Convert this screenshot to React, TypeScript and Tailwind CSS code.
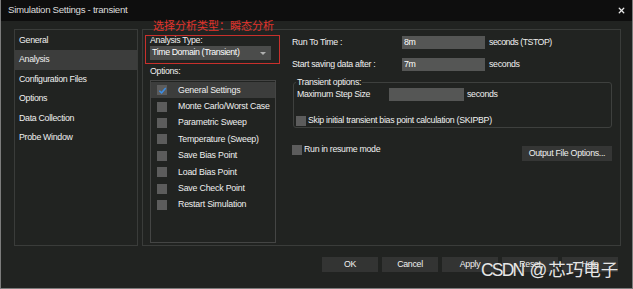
import { X } from "lucide-react";

const navItems = ["General", "Analysis", "Configuration Files", "Options", "Data Collection", "Probe Window"];

const optionItems = [
  "General Settings",
  "Monte Carlo/Worst Case",
  "Parametric Sweep",
  "Temperature (Sweep)",
  "Save Bias Point",
  "Load Bias Point",
  "Save Check Point",
  "Restart Simulation",
];

function Box({ checked }: { checked?: boolean }) {
  return (
    <span className="grid size-[10px] shrink-0 place-items-center bg-[#5c5c5c]">
      {checked && (
        <svg viewBox="0 0 10 10" className="size-[9px]">
          <path d="M1.5 5.2 L4 7.6 L8.6 2.2" fill="none" stroke="#3b8fe8" strokeWidth="1.6" />
        </svg>
      )}
    </span>
  );
}

function Field({ value, w }: { value?: string; w: string }) {
  return <div className={`h-[13px] ${w} shrink-0 bg-[#555655] pl-[2px] leading-[13px] text-white`}>{value}</div>;
}

export default function App() {
  return (
    <div className="relative flex h-[289px] w-[633px] flex-col overflow-hidden whitespace-nowrap border-x border-b border-[#7c7c7c] bg-[#212321] font-['Liberation_Sans',sans-serif] text-[8.8px] tracking-[-0.3px] text-[#f0f0f0]">
      <div className="flex h-[21px] shrink-0 items-center justify-between bg-[#0e0e0e] pl-[7px] pr-[6px]">
        <span className="text-[9.7px] tracking-[-0.3px] text-[#dcdcdc]">Simulation Settings - transient</span>
        <X className="size-[9px] text-[#e8e8e8]" strokeWidth={3.5} />
      </div>

      <div className="flex gap-[4px] pl-[13px] pt-[8px]">
        {/* left nav */}
        <div className="flex h-[217px] w-[124px] flex-col border border-[#3a3c3a] pt-[1px]">
          {navItems.map((n) => (
            <div key={n} className={`flex h-[19.4px] items-center pl-[4px] ${n === "Analysis" ? "bg-[#3c3d3c]" : ""}`}>
              {n}
            </div>
          ))}
        </div>

        {/* main panel */}
        <div className="flex h-[217px] w-[479px] border border-[#3a3c3a] pl-[7px]">
          <div className="flex w-[126px] flex-col">
            <div className="mt-[5px] h-[11px] leading-[11px]">Analysis Type:</div>
            <div className="flex h-[14px] w-[121px] items-center justify-between bg-[#4b4c4b] pl-[2px] pr-[5px] tracking-[-0.4px] text-white">
              <span>Time Domain (Transient)</span>
              <span className="h-0 w-0 border-x-[3px] border-t-[3px] border-x-transparent border-t-[#b0b0b0]" />
            </div>
            <div className="mt-[5px] h-[12px] leading-[12px]">Options:</div>
            <div className="mt-[3px] flex h-[163px] w-[126px] flex-col border border-[#444544] pt-[1px] tracking-[-0.2px]">
              {optionItems.map((o, i) => (
                <div key={o} className={`flex h-[16.4px] shrink-0 items-center ${i === 0 ? "bg-[#3c3d3c]" : ""}`}>
                  <span className="ml-[6px]">
                    <Box checked={i === 0} />
                  </span>
                  <span className="ml-[11px]">{o}</span>
                </div>
              ))}
            </div>
          </div>

          <div className="ml-[16px] flex w-[320px] flex-col pt-[6px]">
            <div className="flex h-[13px] items-center">
              <span className="w-[110px]">Run To Time :</span>
              <Field value="8m" w="w-[83px]" />
              <span className="ml-[4px] tracking-[-0.5px]">seconds (TSTOP)</span>
            </div>
            <div className="mt-[9px] flex h-[13px] items-center">
              <span className="w-[110px]">Start saving data after :</span>
              <Field value="7m" w="w-[83px]" />
              <span className="ml-[4px]">seconds</span>
            </div>

            <div className="relative ml-[1px] mt-[11px] h-[46px] w-[319px] rounded-[3px] border border-[#3e403e]">
              <span className="absolute -top-[7px] left-[2px] bg-[#212321] px-[1px] leading-[12px]">Transient options:</span>
              <div className="mt-[5px] flex h-[13px] items-center pl-[3px]">
                <span className="w-[92px]">Maximum Step Size</span>
                <Field w="w-[75px]" />
                <span className="ml-[3px]">seconds</span>
              </div>
              <div className="mt-[15px] flex h-[10px] items-center pl-[2px]">
                <Box />
                <span className="ml-[2px]">Skip initial transient bias point calculation (SKIPBP)</span>
              </div>
            </div>

            <div className="mt-[17px] flex items-start justify-between">
              <div className="flex h-[10px] items-center">
                <Box />
                <span className="ml-[2px]">Run in resume mode</span>
              </div>
              <div className="mt-[1px] flex h-[15px] w-[90px] items-center justify-center bg-[#353635]">
                Output File Options...
              </div>
            </div>
          </div>
        </div>
      </div>

      <div className="ml-[321px] mt-[11px] flex gap-[4px]">
        {["OK", "Cancel", "Apply", "Reset", "Help"].map((b) => (
          <div key={b} className="flex h-[15px] w-[56px] items-center justify-center bg-[#333433]">
            {b}
          </div>
        ))}
      </div>

      {/* annotations */}
      <div className="absolute left-[152px] top-[18px] font-['Noto_Sans_CJK_SC',sans-serif] text-[11px] leading-[14px] tracking-normal text-[#e2332c]">
        选择分析类型：瞬态分析
      </div>
      <div className="pointer-events-none absolute left-[144px] top-[35px] h-[29px] w-[135px] border border-[#c8302c]" />
      <div className="absolute left-[480px] top-[257px] flex items-baseline text-[17.5px] leading-[24px] tracking-normal text-[#e6e6e6]">
        <span className="tracking-[-1.8px]">CSDN</span>
        <span className="ml-[6px]">@</span>
        <span className="ml-[1px] font-['Noto_Sans_CJK_SC',sans-serif]">芯巧电子</span>
      </div>
    </div>
  );
}
